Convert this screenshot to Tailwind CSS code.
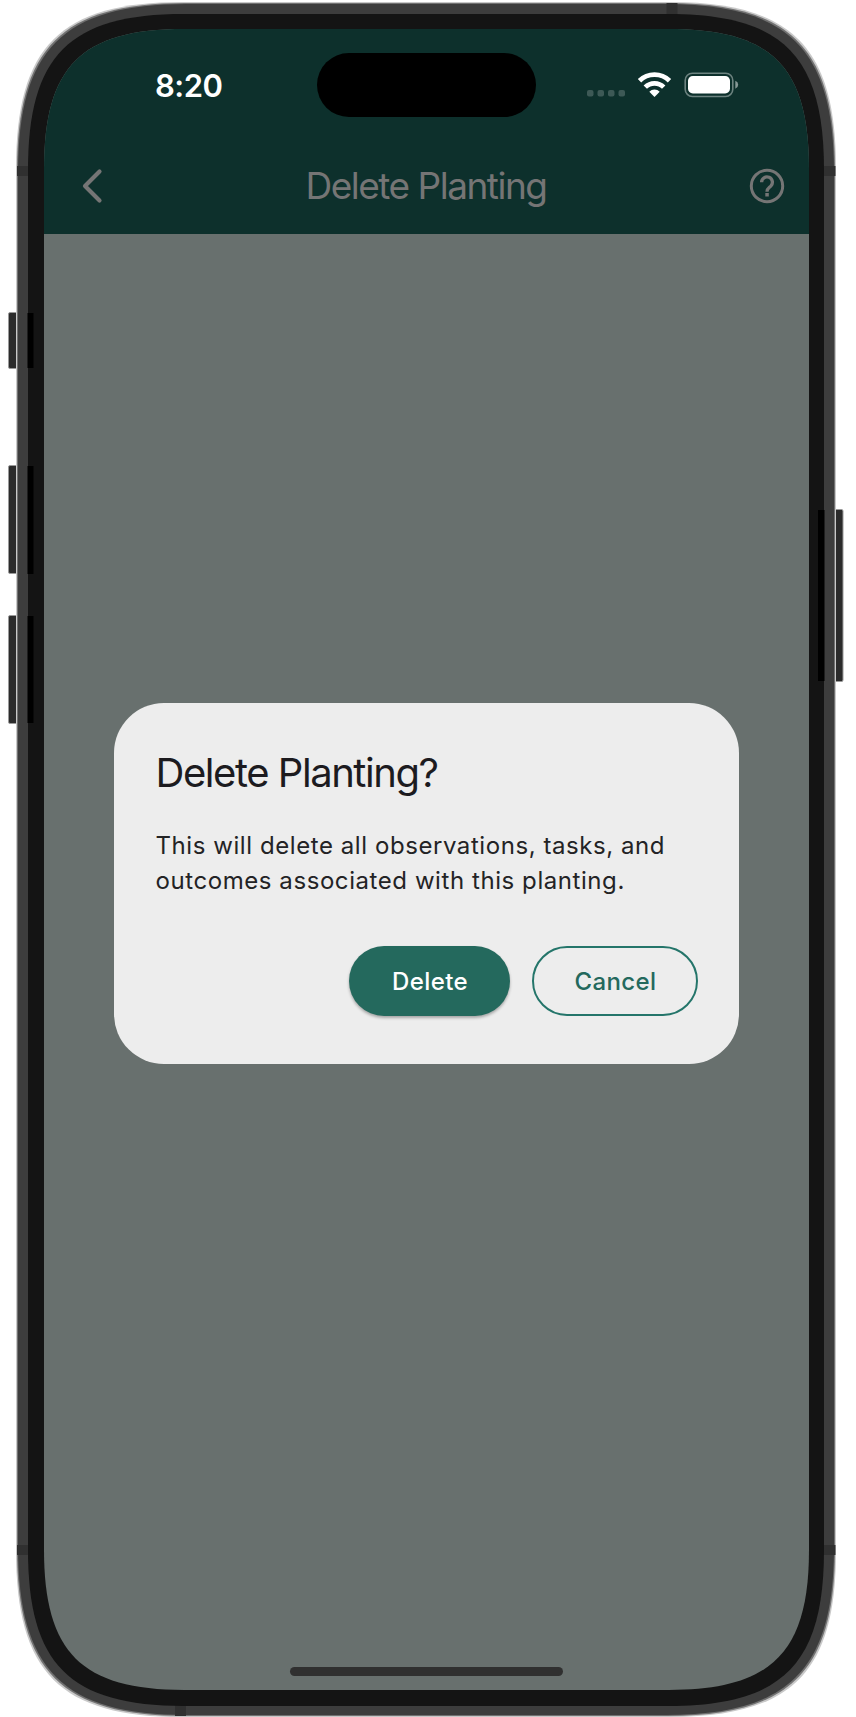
<!DOCTYPE html>
<html lang="en">
<head>
<meta charset="utf-8">
<title>Delete Planting</title>
<script src="https://cdn.jsdelivr.net/npm/@tailwindcss/browser@4"></script>
</head>
<body class="bg-white font-['Inter',sans-serif]">
<div class="relative w-[856px] h-[1717px] overflow-hidden">
  <!-- device body -->
  <svg class="absolute inset-0" width="856" height="1717" viewBox="0 0 856 1717">
    <defs><clipPath id="screen"><path id="clip"/></clipPath></defs>
    <g fill="#2b2b2b" stroke="#9a9a9a" stroke-width="1">
      <rect x="8.5" y="312.5" width="14" height="56" rx="1.5"/>
      <rect x="8.5" y="465.5" width="14" height="108" rx="1.5"/>
      <rect x="8.5" y="615.5" width="14" height="108" rx="1.5"/>
      <rect x="830.500" y="509.500" width="12.500" height="172" rx="1.500"/>
    </g>
    <path id="halo" fill="#c9c9c9"/>
    <path id="edge" fill="#717171"/>
    <path id="frame" fill="#3d3d3d"/>
    <g fill="#303030">
      <rect x="17" y="166" width="12" height="10"/>
      <rect x="823" y="166" width="12.500" height="10"/>
      <rect x="17" y="1545" width="12" height="10"/>
      <rect x="823" y="1545" width="12.500" height="10"/>
      <rect x="666.500" y="3" width="11" height="12"/>
      <rect x="175" y="1705" width="11" height="11"/>
    </g>
    <path id="bezel" fill="#141414"/>
    <g fill="#000">
      <rect x="27.500" y="313" width="6" height="55"/>
      <rect x="27.500" y="466" width="6" height="108"/>
      <rect x="27.500" y="616" width="6" height="107"/>
      <rect x="818" y="510" width="6.500" height="171"/>
    </g>
  </svg>

  <div class="relative ml-[44px] mt-[29px] w-[765px] h-[1661px] bg-[#68706e] flex flex-col items-center [clip-path:url(#screen)]">
    <header class="w-full h-[205px] bg-[#0d302c] flex flex-col shrink-0">
      <div class="h-[112px] grid grid-cols-[273px_219px_273px]">
        <div class="pl-[111px] pt-[38px] text-[31px] leading-[38px] font-semibold text-white tracking-[-0.5px]">8:20</div>
        <div class="mt-[24px] h-[64px] rounded-full bg-black"></div>
        <div class="pl-[50px] pt-[36px]">
          <svg width="160" height="40" viewBox="586 65 160 40">
            <g fill="#3d5956"><rect x="587" y="90" width="6.500" height="6.500" rx="2"/><rect x="597.500" y="90" width="6.500" height="6.500" rx="2"/><rect x="608" y="90" width="6.500" height="6.500" rx="2"/><rect x="618.500" y="90" width="6.500" height="6.500" rx="2"/></g>
            <g fill="none" stroke="#fff" stroke-width="4.800">
              <path d="M639.500 80.700a21.500 21.500 0 0 1 30 0"/>
              <path d="M645.300 87.100a13 13 0 0 1 18.400 0"/>
            </g>
            <path fill="#fff" d="M649.300 91.700a7.500 7.500 0 0 1 10.400 0l-5.200 5.200z"/>
            <rect x="685.200" y="73.200" width="47.600" height="23.300" rx="7.200" fill="none" stroke="#6d8380" stroke-width="1.600"/>
            <rect x="688" y="76" width="42" height="17.500" rx="4.800" fill="#fff"/>
            <path d="M735.300 80.800q2.900 1.200 2.900 4t-2.900 4z" fill="#869896"/>
          </svg>
        </div>
      </div>
      <div class="h-[89px] flex items-center justify-between pl-[37px] pr-[24px]">
        <svg width="24" height="36" viewBox="0 0 24 36" fill="none" stroke="#757575" stroke-width="4.200" stroke-linecap="round" stroke-linejoin="round"><path d="M18.500 3.500 4 18l14.500 14.500"/></svg>
        <h1 class="pt-px mr-[2px] text-[37px] leading-[46px] text-[#757575] tracking-[-1.5px] whitespace-nowrap">Delete Planting</h1>
        <svg width="36" height="36" viewBox="0 0 36 36"><circle cx="18" cy="18" r="15.700" fill="none" stroke="#757575" stroke-width="3"/><path d="M12.600 14.300a5.400 5.400 0 1 1 9.200 3.800c-1.900 1.900-3.800 2.500-3.800 5.600" fill="none" stroke="#757575" stroke-width="3.300"/><rect x="16.300" y="25" width="3.500" height="3.500" fill="#757575"/></svg>
      </div>
    </header>
    <section class="mt-[469px] w-[625px] h-[361px] rounded-[50px] bg-[#ededed] pl-[41.5px] pr-[41px] pt-[46px] shrink-0">
      <h2 class="text-[40px] leading-[48px] text-[#1c1b1f] tracking-[-1.45px] whitespace-nowrap">Delete Planting?</h2>
      <p class="mt-[31px] text-[24px] leading-[35px] text-[#232325] tracking-[0.57px] whitespace-nowrap">This will delete all observations, tasks, and<br>outcomes associated with this planting.</p>
      <div class="mt-[48px] flex justify-end gap-[22px] text-[24px] font-medium tracking-[0.4px]">
        <button class="w-[161px] h-[70px] pt-[2px] pl-px rounded-full bg-[#24695d] text-white shadow-[0_2px_3px_rgba(0,0,0,0.3)]">Delete</button>
        <button class="w-[166px] h-[70px] pt-[2px] pl-px rounded-full border-2 border-[#24756a] text-[#24695d]">Cancel</button>
      </div>
    </section>
    <div class="mt-auto mb-[14px] w-[273px] h-[9px] rounded-full bg-[#303030]"></div>
  </div>
</div>
<script>
// Continuous-curvature rounded rectangle
function squircle(x, y, w, h, r) {
  const a = 1.31 * r, c = 0.349 * r, R = x + w, B = y + h;
  return `M${x+a} ${y}H${R-a}C${R-c} ${y} ${R} ${y+c} ${R} ${y+a}V${B-a}C${R} ${B-c} ${R-c} ${B} ${R-a} ${B}`
    + `H${x+a}C${x+c} ${B} ${x} ${B-c} ${x} ${B-a}V${y+a}C${x} ${y+c} ${x+c} ${y} ${x+a} ${y}Z`;
}
const shapes = {
  clip: [0, 0, 765, 1661, 107],
  bezel: [28, 14, 796, 1692, 119],
  frame: [18, 4, 816, 1711, 129],
  edge: [17, 3, 818, 1713, 128],
  halo: [16, 2, 820, 1715, 127]
};
for (const id in shapes) document.getElementById(id).setAttribute('d', squircle(...shapes[id]));
</script>
</body>
</html>
